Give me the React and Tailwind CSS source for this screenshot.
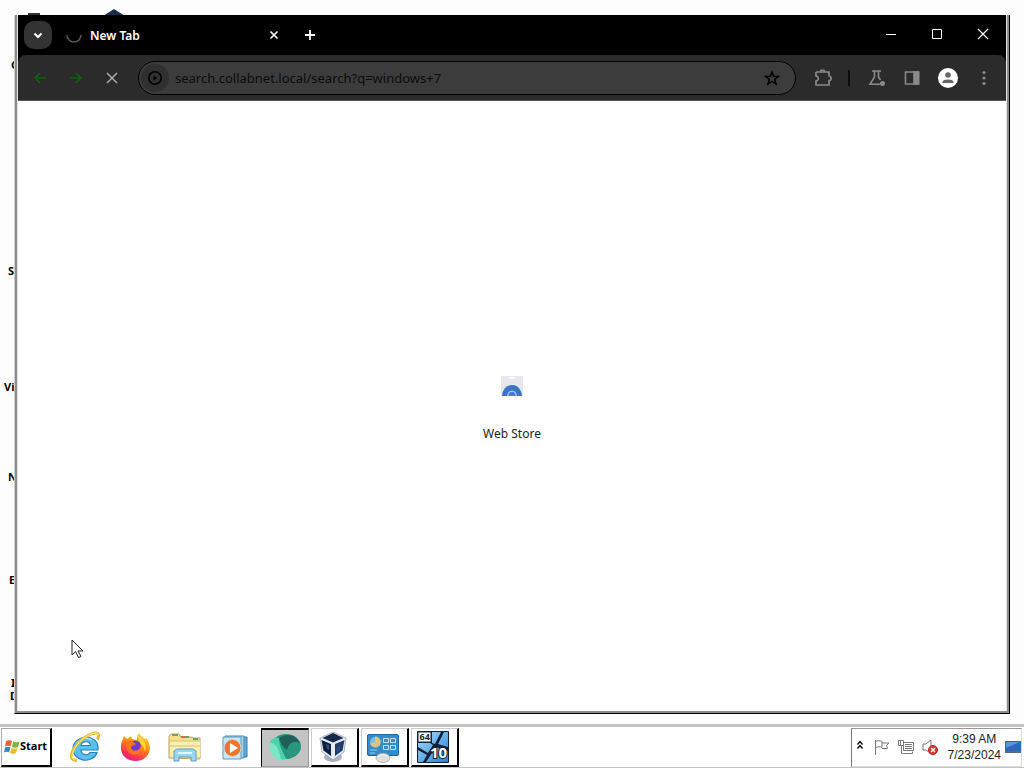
import React, { useState } from "react";

const desktopLabels = [
    { text: "C", place: "left-[11px] top-[58px]" },
    { text: "S", place: "left-[8px] top-[264px]" },
    { text: "Vi", place: "left-[4px] top-[380px]" },
    { text: "N", place: "left-[8px] top-[470px]" },
    { text: "E", place: "left-[9px] top-[573px]" },
    { text: "I", place: "left-[11px] top-[676px]" },
    { text: "D", place: "left-[10px] top-[689px]" },
];

const Stroke = ({ children, size = "size-4", width = 2 }) => (
    <svg
        viewBox="0 0 16 16"
        className={size}
        fill="none"
        stroke="currentColor"
        strokeWidth={width}
    >
        {children}
    </svg>
);

const TitleBar = () => (
    <div className="flex h-10 items-center bg-black pl-1.5 text-white">
        <button
            aria-label="Search tabs"
            className="flex size-7 items-center justify-center rounded-[10px] bg-[#333]"
        >
            <Stroke>
                <path d="M4.500 6.500 8 10l3.500-3.500" />
            </Stroke>
        </button>
        <div className="ml-3.5 flex w-[216px] items-center">
            <svg
                viewBox="0 0 16 16"
                className="size-4"
                fill="none"
                stroke="#555"
                strokeWidth="1.6"
            >
                <path d="M1 8a7 7 0 0 0 14 0" />
            </svg>
            <span className="ml-2 flex-1 pt-0.5 text-xs font-semibold">New Tab</span>
            <button aria-label="Close tab">
                <Stroke>
                    <path d="m4.500 4.500 7 7m0-7-7 7" strokeWidth="1.6" />
                </Stroke>
            </button>
        </div>
        <button aria-label="New tab" className="ml-5">
            <Stroke width={1.8}>
                <path d="M8 3v10M3 8h10" />
            </Stroke>
        </button>
        <div className="ml-auto flex h-full items-center pb-0.5">
            <button aria-label="Minimize" className="flex w-[46px] justify-center">
                <Stroke width={1}>
                    <path d="M3 8.500h10" />
                </Stroke>
            </button>
            <button aria-label="Maximize" className="flex w-[46px] justify-center">
                <Stroke width={1}>
                    <path d="M3.500 3.500h9v9h-9z" />
                </Stroke>
            </button>
            <button aria-label="Close" className="flex w-[46px] justify-center">
                <Stroke width={1.2}>
                    <path d="m3 3 10 10M13 3 3 13" />
                </Stroke>
            </button>
        </div>
    </div>
);

const AddressBar = () => {
    const [url, setUrl] = useState("search.collabnet.local/search?q=windows+7");

    return (
        <div className="ml-[18px] flex h-[34px] flex-1 items-center rounded-full border border-black bg-[#3c3c3c] pr-[15px] pl-0.5 text-black">
            <button
                aria-label="Site information"
                className="flex size-7 items-center justify-center rounded-full bg-[#303030]"
            >
                <svg
                    viewBox="0 0 16 16"
                    className="size-4"
                    fill="none"
                    stroke="currentColor"
                    strokeWidth="1.6"
                >
                    <circle cx="8" cy="8" r="6.2" />
                    <path d="M6.500 5.500v5L10.500 8z" fill="currentColor" stroke="none" />
                </svg>
            </button>
            <input
                aria-label="Address and search bar"
                className="ml-1.5 min-w-0 flex-1 bg-transparent pt-0.5 text-[13px] text-[#0c0c0c] outline-none"
                value={url}
                onChange={(e) => setUrl(e.target.value)}
            />
            <button aria-label="Bookmark this tab">
                <Stroke width={1.6}>
                    <path d="m8 2 1.700 4.200 4.500.3-3.500 2.900 1.200 4.400L8 11.400l-3.900 2.400 1.200-4.400-3.500-2.900 4.500-.3z" />
                </Stroke>
            </button>
        </div>
    );
};

const Toolbar = () => (
    <div className="bg-black">
        <div className="flex h-[46px] items-center rounded-t-lg border-b border-[#555] bg-[#2b2b2b] px-3.5 text-[#8a8a8a]">
            <div className="flex gap-5">
                <button aria-label="Back" className="text-[#0b640b]">
                    <Stroke width={1.6}>
                        <path d="M14 8H3m5-5L3 8l5 5" />
                    </Stroke>
                </button>
                <button aria-label="Forward" className="text-[#0b640b]">
                    <Stroke width={1.6}>
                        <path d="M2 8h11M8 3l5 5-5 5" />
                    </Stroke>
                </button>
                <button aria-label="Stop loading" className="text-[#aaa]">
                    <Stroke width={1.5}>
                        <path d="m3 3 10 10M13 3 3 13" />
                    </Stroke>
                </button>
            </div>
            <AddressBar />
            <button aria-label="Extensions" className="ml-[18px]">
                <svg
                    viewBox="0 0 18 18"
                    className="size-[18px]"
                    fill="none"
                    stroke="currentColor"
                    strokeWidth="1.7"
                >
                    <path d="M2 3h13v4.500M15 11v5H2v-4c3-.3 3-4.700 0-5V3" />
                    <path d="M6.500 2.500a2 1.500 0 0 1 4 0M15.500 7.300a1.500 2 0 0 1 0 4" />
                </svg>
            </button>
            <div className="ml-4 h-4 w-0.5 bg-[#0c0c0c]" />
            <button aria-label="Chrome Labs" className="ml-[18px]">
                <svg
                    viewBox="0 0 18 18"
                    className="size-[18px]"
                    fill="none"
                    stroke="currentColor"
                    strokeWidth="1.6"
                >
                    <path d="M4 2h9M6.500 2v6L2 15.300h10M10.500 2v6l2 3" />
                    <circle cx="14.500" cy="14.500" r="2.500" fill="currentColor" stroke="none" />
                </svg>
            </button>
            <button aria-label="Side panel" className="ml-[18px]">
                <Stroke width={1.6}>
                    <path d="M1.500 2h13v12h-13z" />
                    <path d="M10 2h4.500v12H10z" fill="currentColor" />
                </Stroke>
            </button>
            <button aria-label="Profile" className="ml-[18px]">
                <svg viewBox="0 0 20 20" className="size-5">
                    <circle cx="10" cy="10" r="10" fill="#fff" />
                    <circle cx="10" cy="7" r="2.800" fill="#666" />
                    <path d="M4.500 15v-1c0-3.300 11-3.300 11 0v1z" fill="#666" />
                </svg>
            </button>
            <button aria-label="Menu" className="ml-[18px]">
                <svg viewBox="0 0 16 16" className="size-4" fill="currentColor">
                    <circle cx="8" cy="2.500" r="1.600" />
                    <circle cx="8" cy="8" r="1.600" />
                    <circle cx="8" cy="13.500" r="1.600" />
                </svg>
            </button>
        </div>
    </div>
);

const BrowserWindow = () => (
    <section className="relative flex flex-1 flex-col border-r border-b border-l border-black border-l-[#d0d0d0] bg-white">
        <div className="flex flex-1 flex-col border-r-2 border-b-2 border-l-2 border-[#8c8c8c]">
            <div className="flex flex-1 flex-col border-r border-l border-[#e4e4e4] bg-white">
                <TitleBar />
                <Toolbar />
                <main className="flex flex-1 flex-col items-center justify-center pt-2">
                    <a href="#store" className="flex flex-col items-center text-[#222]">
                        <svg viewBox="0 0 22 20" className="h-5 w-[22px]">
                            <path d="M0 0h22v20H0z" fill="#e6e8ec" />
                            <path d="M8 2h6" stroke="#fff" strokeWidth="1.500" />
                            <path d="M1 20a10 11 0 0 1 20 0z" fill="#3b73c8" />
                            <path d="M6 20a5 5.500 0 0 1 10 0z" fill="#a3c2ec" />
                            <path d="M7.500 20a3.500 4 0 0 1 7 0z" fill="#3f7dda" />
                        </svg>
                        <span className="mt-7 text-xs leading-5">Web Store</span>
                    </a>
                </main>
            </div>
        </div>
    </section>
);

const InternetExplorer = () => (
    <svg viewBox="0 0 32 32" className="size-8">
        <path
            d="M29 19H12c.3 5.500 7 6 9 2.500h7C24 33.500 4 31 4 17.500S28 2 29 16zM12 14.500h9.500c-.5-5-8.500-5-9.500 0z"
            fill="#5cc0ef"
            stroke="#2580bd"
            strokeWidth="1.2"
            fillRule="evenodd"
        />
        <path d="M7 16C8 8 17 5 23 9" fill="none" stroke="#b5e6fa" strokeWidth="1.5" />
        <path
            d="M8 29C-3 31 3 13 19 4.500c10-5 12-2 9.500 4"
            fill="none"
            stroke="#e3b62c"
            strokeWidth="3"
        />
        <path
            d="M6 29C-1 27 5 13 19 4.500c7-4 10-3 10 0"
            fill="none"
            stroke="#f8e27c"
            strokeWidth="1.4"
        />
    </svg>
);

const Firefox = () => (
    <svg viewBox="0 0 32 32" className="size-8">
        <defs>
            <linearGradient id="fox" x1="0.8" y1="0" x2="0.3" y2="1">
                <stop offset="0" stopColor="#ffe226" />
                <stop offset="0.45" stopColor="#ff8a16" />
                <stop offset="0.8" stopColor="#fb3750" />
                <stop offset="1" stopColor="#e31587" />
            </linearGradient>
        </defs>
        <path
            d="M3 10 5 5l3 3 4-3 1 3 5 1c0-3 0-5 2-7 2 4 4 4 6 6l1-1c9 11 1 23-10 23S-1 22 3 10z"
            fill="url(#fox)"
        />
        <circle cx="16" cy="15.500" r="6" fill="#7139cc" />
        <path d="M7 11c4-3 7 0 10 2-2 2-5 1-5 4 1 4 8 4 10-2 2 13-17 11-15-4z" fill="#ff741c" />
        <path d="M19 4c7 5 9 11 7 17 0-7-7-8-7-17z" fill="#ffdc32" />
    </svg>
);

const Folder = () => (
    <svg viewBox="0 0 34 32" className="h-8 w-[34px]">
        <path
            d="M1 27V5l2-2h8l2 3h10l2 1h7v21z"
            fill="#f5e08c"
            stroke="#bea55b"
        />
        <path d="M4 4h6M14 6h7M25 8h5" stroke="#66a567" strokeWidth="2" />
        <path d="M13 6h4" stroke="#dc6650" strokeWidth="2" />
        <path d="M2 10h30v16H2z" fill="#fbefb1" />
        <path d="M2 10h30M2 15h30" stroke="#d9c272" />
        <path
            d="M6 30V20l3-2h16l3 2v10h-5v-4H11v4z"
            fill="#9ed4ee"
            stroke="#5a9fc8"
        />
        <path d="M10 22h14" stroke="#e4f6ff" strokeWidth="2" />
    </svg>
);

const MediaPlayer = () => (
    <svg viewBox="0 0 28 28" className="size-7">
        <path d="M7 4h19v20H7z" fill="#69acd4" stroke="#377da9" />
        <path d="M4 3h19v22H4z" fill="#a8d4eb" stroke="#4488b2" />
        <path d="M2 4h18v22H2z" fill="#c9e6f3" stroke="#5b9dc2" />
        <circle cx="11.500" cy="15" r="8.500" fill="#ec762c" stroke="#d2d7dc" />
        <path d="M9 10v10l8-5z" fill="#fff" />
    </svg>
);

const GreenOrb = () => (
    <svg viewBox="0 0 34 30" className="h-[30px] w-[34px]">
        <ellipse cx="18" cy="13.500" rx="15" ry="12.500" fill="#1f9c80" />
        <path d="M11 5c7-6 19-3 21 6-5-4-9-2-13 6-4-3-7-7-8-12z" fill="#1f6058" />
        <path d="M19 17c2-8 8-10 13-6 1 8-6 14-13 15-2-2-2-6 0-9z" fill="#2b967c" />
        <path d="M2 9c3-5 7-5 9-4 0 7 3 12 7 21-3 1-7 0-10-2C3 20 1 14 2 9z" fill="#4fd0a9" />
        <path d="M2 10c5-1 10 6 11 18C5 25 0 18 2 10z" fill="#7be6c6" />
    </svg>
);

const VirtualBox = () => (
    <svg viewBox="0 0 30 32" className="h-8 w-[30px]">
        <ellipse cx="15" cy="26" rx="9" ry="5" fill="#aab3c0" />
        <path d="m15 1 13 6-2 14-11 8-11-8L2 7z" fill="#e4ebf3" stroke="#7d8da2" strokeWidth="0.600" />
        <path d="m15 2 10.500 5L15 11.500 4.500 7z" fill="#15294b" />
        <path d="m3.500 9 9.500 4v12l-7.500-5.500z" fill="#10203d" />
        <path d="m26.500 9-9.500 4v12l7.500-5.500z" fill="#203e6c" />
        <path d="m8 13 3 1v5l-2-1zM19 16l3-1v4l-3 2z" fill="#2d4f7c" />
    </svg>
);

const ControlPanel = () => (
    <svg viewBox="0 0 34 32" className="h-8 w-[34px]">
        <rect x="1.500" y="3.500" width="31" height="21" rx="1.500" fill="#348dc9" stroke="#1b68a2" />
        <circle cx="9" cy="11" r="5" fill="#78bde2" />
        <path d="M9 11V5.500a5.500 5.500 0 1 1-5 7z" fill="#dcc382" />
        <path d="M17.500 7.500h5v4h-5zm7 0h5v4h-5zm-7 7h5v4h-5zm7 0h5v4h-5z" fill="none" stroke="#bfe3f6" />
        <path d="M4 19h7M4 22h5" stroke="#8bd0f1" />
        <ellipse cx="17" cy="27" rx="7" ry="4.500" fill="#e1dfda" stroke="#b5b5b5" />
        <path d="M12 26c3-3 7-3 10 0" fill="none" stroke="#fff" />
    </svg>
);

const SimpleTen = () => (
    <svg viewBox="0 0 32 32" className="size-8">
        <defs>
            <linearGradient id="pane" x1="0" y1="0" x2="1" y2="1">
                <stop offset="0" stopColor="#a9dcfa" />
                <stop offset="1" stopColor="#2682d3" />
            </linearGradient>
        </defs>
        <rect width="32" height="32" rx="1" fill="#0d2038" />
        <path d="M15 1h9l-6 12-3-1zM27 1h4v15l-10-3zM1 12h12l3 2-5 8-10-6zM1 19l9 5-4 7H1zM19 16l12 4v11H9z" fill="url(#pane)" />
        <rect x="1" y="1" width="13" height="10" fill="#fff" stroke="#17293e" />
        <text x="2.500" y="9" fontSize="9" fontWeight="bold" fill="#222">
            64
        </text>
        <text
            x="13"
            y="27"
            fontSize="15"
            fontWeight="bold"
            fill="#fff"
            stroke="#0d2038"
            strokeWidth="2"
            paintOrder="stroke"
        >
            10
        </text>
    </svg>
);

const launchers = [
    { name: "Internet Explorer", icon: InternetExplorer },
    { name: "Firefox", icon: Firefox },
    { name: "Windows Explorer", icon: Folder },
    { name: "Media Player", icon: MediaPlayer },
];

const tasks = [
    { name: "Browser", icon: GreenOrb, active: true },
    { name: "VirtualBox", icon: VirtualBox },
    { name: "Control Panel", icon: ControlPanel },
    { name: "Simple Ten", icon: SimpleTen },
];

const StartButton = () => (
    <button className="flex h-[39px] w-[51px] items-center border-t border-r-2 border-b-2 border-l border-t-[#aaa] border-r-black border-b-black border-l-[#aaa] pl-0.5 text-[11px] font-bold text-black">
        <svg viewBox="0 0 16 16" className="size-4 shrink-0">
            <path d="M2 2c3-1 4-1 6 0L6.500 7.500C5 6.500 3 6.500 1 7.500z" fill="#e7652c" />
            <path d="M9 2.500c2 1 4 1 6.500 0L14 8c-2 1-4 1-6 0z" fill="#79b63c" />
            <path d="M1 8.500c2-1 4-1 5.500 0L5 13.500c-1-1-3-1-5 0z" fill="#3c83c5" />
            <path d="M7.500 9c2 1 4 1 6 0L12 14c-2 1-4 1-6 0z" fill="#f0b933" />
        </svg>
        Start
    </button>
);

const Tray = () => (
    <div className="mr-0.5 ml-auto flex h-[39px] items-center border border-t-[#999] border-r-[#ddd] border-b-[#ddd] border-l-[#777] pl-1 text-[#777]">
        <button aria-label="Show hidden icons" className="pb-1 text-black">
            <svg viewBox="0 0 8 10" className="h-2.5 w-2" fill="none" stroke="currentColor" strokeWidth="1.300">
                <path d="m1.500 4.500 2.500-3 2.500 3M1.500 8.500l2.500-3 2.500 3" />
            </svg>
        </button>
        <svg viewBox="0 0 16 16" className="ml-2.5 size-4" fill="none" stroke="currentColor">
            <path d="M1.500 16V1M1 2.500c3-1 5-1 7 0v6c-2-1-4-1-6 0M8 4h7l-2.500 2.500 1 3H8" />
        </svg>
        <svg viewBox="0 0 16 16" className="ml-2 size-4" fill="none" stroke="currentColor">
            <path d="M.5 1.500h5v5h-5zM2.500 1v5M3.500 6.500v8h2M5.500 3.500h10v8h-10zM7 5.500h7M7 7.500h7M7 9.500h7M5.500 14.500h9v-2" />
        </svg>
        <svg viewBox="0 0 16 16" className="ml-2 size-4" fill="none" stroke="currentColor">
            <path d="M1 5h3l5-4v14l-5-4H1z" />
            <circle cx="11" cy="11" r="4.500" fill="#d83732" stroke="#b51f1b" />
            <path d="m9 9 4 4m0-4-4 4" stroke="#fff" strokeWidth="1.400" />
        </svg>
        <div className="ml-2.5 text-center font-['Liberation_Sans',Arial,sans-serif] text-xs leading-4 text-[#222]">
            <div>9:39 AM</div>
            <div>7/23/2024</div>
        </div>
        <button aria-label="Show desktop" className="ml-1">
            <svg viewBox="0 0 16 14" className="h-3.5 w-4">
                <path d="M0 1h16v10H0z" fill="#2d67bb" />
                <path d="M1 2h14L1 8z" fill="#5794dc" />
                <path d="M0 12h16" stroke="#1c365f" strokeWidth="1.500" />
            </svg>
        </button>
    </div>
);

const Taskbar = () => (
    <footer className="flex h-11 items-center border-t-[3px] border-b border-t-[#c3c3c3] border-b-[#c3c3c3] bg-white pl-px">
        <StartButton />
        <div className="ml-2 flex">
            {launchers.map(({ name, icon: Icon }) => (
                <button
                    key={name}
                    aria-label={name}
                    className="flex w-[50px] items-center justify-center"
                >
                    <Icon />
                </button>
            ))}
        </div>
        <div className="ml-px flex gap-0.5">
            {tasks.map(({ name, icon: Icon, active }) => (
                <button
                    key={name}
                    aria-label={name}
                    className={
                        active
                            ? "flex h-[39px] w-12 items-center justify-center border-t-2 border-r border-b border-l border-t-black border-r-[#999] border-b-[#999] border-l-black bg-[#c3c3c3]"
                            : "flex h-[39px] w-12 items-center justify-center border-t border-r-2 border-b-2 border-l border-t-[#ccc] border-r-black border-b-black border-l-[#ccc] pr-1"
                    }
                >
                    <Icon />
                </button>
            ))}
        </div>
        <Tray />
    </footer>
);

const App = () => (
    <div className="relative flex min-h-screen flex-col overflow-hidden bg-[#fdfdfd] font-['Noto_Sans','Open_Sans',sans-serif]">
        {desktopLabels.map(({ text, place }) => (
            <span
                key={text}
                className={`absolute text-[11px] leading-[13px] font-bold text-black ${place}`}
            >
                {text}
            </span>
        ))}
        <svg viewBox="0 0 22 8" className="absolute top-2 left-[103px] h-2 w-[22px]">
            <path d="M0 8 11 1l11 7z" fill="#1b2c48" />
        </svg>
        <div className="absolute top-[13px] left-7 h-1 w-3 bg-[#333]" />
        <div className="flex flex-1 pt-[15px] pr-3.5 pb-2.5 pl-3.5">
            <BrowserWindow />
        </div>
        <Taskbar />
        <svg viewBox="0 0 14 21" className="absolute top-[639px] left-[71px] h-[21px] w-3.5">
            <path
                d="M1 1v15l3.500-3.500 3 6 2.500-1-3-5.500h5z"
                fill="#fff"
                stroke="#222"
            />
        </svg>
    </div>
);

export default App;
